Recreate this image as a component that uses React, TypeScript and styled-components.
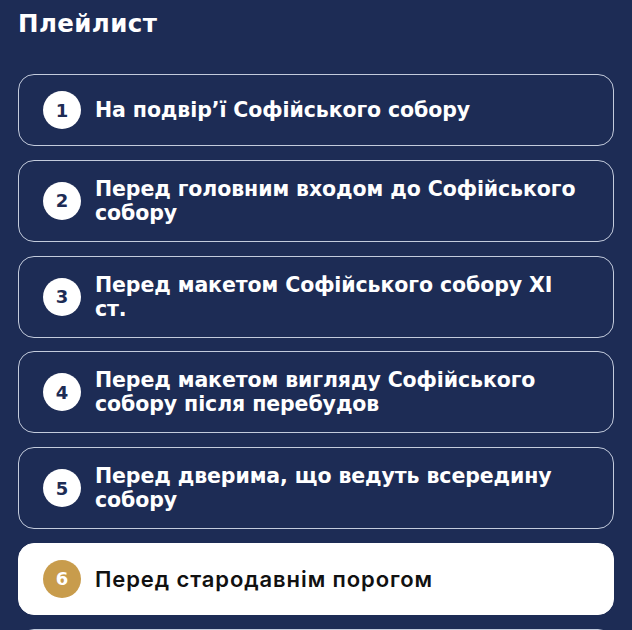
import React from "react";
import styled, { createGlobalStyle } from "styled-components";

const Global = createGlobalStyle`
  html, body { margin: 0; padding: 0; background: #1d2c55; }
  body { font-family: "DejaVu Sans", sans-serif; }
`;

const Page = styled.div`
  padding: 6px 18px 0 18px;
  background: #1d2c55;
  min-height: 630px;
  box-sizing: border-box;
`;

const Title = styled.h2`
  margin: 0 0 32px 0;
  font-family: "DejaVu Sans", sans-serif;
  font-weight: 700;
  font-size: 24.5px;
  line-height: 36px;
  color: #ffffff;
  letter-spacing: 0.4px;
`;

const List = styled.div`
  display: flex;
  flex-direction: column;
  gap: 13.8px;
`;

const Card = styled.div<{ $active?: boolean }>`
  display: flex;
  align-items: center;
  gap: 14px;
  min-height: 72px;
  box-sizing: border-box;
  padding: 16px 36px 16px 24px;
  border-radius: 16px;
  border: 1px solid ${(p) => (p.$active ? "#ffffff" : "#c3cbdc")};
  background: ${(p) => (p.$active ? "#ffffff" : "transparent")};
`;

const Num = styled.div<{ $active?: boolean }>`
  flex: 0 0 38px;
  width: 38px;
  height: 38px;
  border-radius: 50%;
  display: flex;
  align-items: center;
  justify-content: center;
  background: ${(p) => (p.$active ? "#c89c4c" : "#ffffff")};
  color: ${(p) => (p.$active ? "#ffffff" : "#1d2c55")};
  font-family: "DejaVu Sans", sans-serif;
  font-weight: 700;
  font-size: 18px;
`;

const Label = styled.div<{ $active?: boolean }>`
  font-family: ${(p) => (p.$active ? '"Inter", "Liberation Sans", sans-serif' : '"DejaVu Sans", sans-serif')};
  font-weight: ${(p) => (p.$active ? 600 : 700)};
  font-size: ${(p) => (p.$active ? "22px" : "20.5px")};
  line-height: 24px;
  color: ${(p) => (p.$active ? "#111111" : "#ffffff")};
  letter-spacing: ${(p) => (p.$active ? "0.9px" : "-0.1px")};
`;

const items = [
  "На подвір’ї Софійського собору",
  "Перед головним входом до Софійського собору",
  "Перед макетом Софійського собору XI ст.",
  "Перед макетом вигляду Софійського собору після перебудов",
  "Перед дверима, що ведуть всередину собору",
  "Перед стародавнім порогом",
  "Перед мозаїкою Оранти",
];

export default function App() {
  return (
    <Page>
      <Global />
      <Title>Плейлист</Title>
      <List>
        {items.map((t, i) => {
          const active = i === 5;
          return (
            <Card key={i} $active={active}>
              <Num $active={active}>{i + 1}</Num>
              <Label $active={active}>{t}</Label>
            </Card>
          );
        })}
      </List>
    </Page>
  );
}
